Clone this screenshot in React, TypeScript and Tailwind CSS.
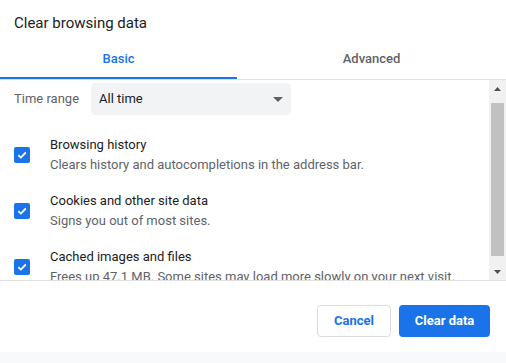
import React from "react";

function Check() {
  return (
    <div className="w-4 h-4 rounded-[2px] bg-[#1a73e8] flex items-center justify-center shrink-0">
      <svg width="12" height="12" viewBox="0 0 12 12">
        <path d="M2.3 6.2 L4.8 8.6 L9.8 3.5" stroke="white" strokeWidth="1.8" fill="none" />
      </svg>
    </div>
  );
}

function Item({ title, sub }: { title: string; sub: string }) {
  return (
    <div className="h-[56px] flex items-center shrink-0">
      <div className="pl-[14px] pr-5">
        <Check />
      </div>
      <div className="flex flex-col text-[13px] leading-5 whitespace-nowrap">
        <span className="text-[#202124]">{title}</span>
        <span className="text-[#5f6368]">{sub}</span>
      </div>
    </div>
  );
}

export default function App() {
  return (
    <div
      className="w-[506px] h-[363px] bg-white flex flex-col overflow-hidden"
      style={{ fontFamily: "Roboto, 'Liberation Sans', sans-serif" }}
    >
      <div className="h-[40px] pl-[14px] pt-[13px] text-[15px] leading-5 text-[#202124]">
        Clear browsing data
      </div>
      <div className="h-[40px] flex border-b border-[#e0e0e0] shrink-0">
        <div className="w-[237px] flex flex-col">
          <div className="flex-1 flex items-center justify-center text-[13px] font-medium text-[#1a73e8] pt-[1px]">
            Basic
          </div>
          <div className="h-[2px] bg-[#1a73e8]" />
        </div>
        <div className="flex-1 flex flex-col">
          <div className="flex-1 flex items-center justify-center text-[13px] font-medium text-[#5f6368] pt-[1px]">
            Advanced
          </div>
          <div className="h-[2px]" />
        </div>
      </div>
      <div className="h-[201px] flex border-b border-[#e0e0e0] shrink-0">
        <div className="flex-1 overflow-hidden flex flex-col">
          <div className="flex items-center pt-[3px] shrink-0">
            <div className="w-[91px] shrink-0 pl-[14px] text-[13px] text-[#5f6368] whitespace-nowrap">Time range</div>
            <div className="w-[200px] h-[32px] shrink-0 bg-[#f1f3f4] rounded-[4px] flex items-center justify-between pl-2 pr-[8px]">
              <span className="text-[13px] text-[#202124]">All time</span>
              <svg width="10" height="5" viewBox="0 0 10 5">
                <path d="M0 0 L10 0 L5 5 Z" fill="#5f6368" />
              </svg>
            </div>
          </div>
          <div className="h-[12px] shrink-0" />
          <Item title="Browsing history" sub="Clears history and autocompletions in the address bar." />
          <Item title="Cookies and other site data" sub="Signs you out of most sites." />
          <Item title="Cached images and files" sub="Frees up 47.1 MB. Some sites may load more slowly on your next visit." />
        </div>
        <div className="w-[17px] bg-[#f1f1f1] flex flex-col items-center shrink-0">
          <div className="h-[17px] flex items-center justify-center w-full">
            <svg width="7" height="4" viewBox="0 0 7 4">
              <path d="M0 4 L7 4 L3.5 0 Z" fill="#505050" />
            </svg>
          </div>
          <div className="h-[6px]" />
          <div className="w-[13px] h-[153px] bg-[#c1c1c1]" />
          <div className="flex-1" />
          <div className="h-[17px] flex items-center justify-center w-full">
            <svg width="7" height="4" viewBox="0 0 7 4">
              <path d="M0 0 L7 0 L3.5 4 Z" fill="#505050" />
            </svg>
          </div>
        </div>
      </div>
      <div className="h-[71px] flex items-start justify-end pt-[24px] pr-[16px] gap-2 shrink-0">
        <button className="w-[74px] h-[32px] rounded-[4px] border border-[#dadce0] text-[13px] font-bold text-[#1a73e8] bg-white">
          Cancel
        </button>
        <button className="w-[91px] h-[32px] rounded-[4px] bg-[#1a73e8] text-[13px] font-bold text-white">
          Clear data
        </button>
      </div>
      <div className="flex-1 bg-[#f8f9fa]" />
    </div>
  );
}
